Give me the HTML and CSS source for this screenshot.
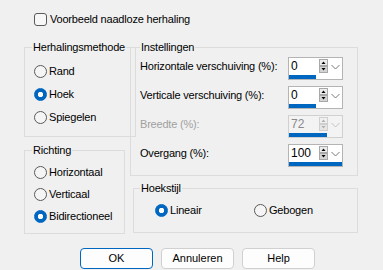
FILE: index.html
```html
<!DOCTYPE html>
<html lang="nl">

<head>
    <meta charset="UTF-8" />
    <title>Naadloze herhaling</title>
    <link rel="stylesheet" href="styles.css">
</head>

<body>
    <div class="dialog">
        <label class="check"><span class="box"></span>Voorbeeld naadloze herhaling</label>

        <div class="main">
            <div class="col col-left">
                <fieldset class="group methode">
                    <legend>Herhalingsmethode</legend>
                    <div class="options">
                        <label class="radio"><span class="dot"></span>Rand</label>
                        <label class="radio on"><span class="dot"></span>Hoek</label>
                        <label class="radio"><span class="dot"></span>Spiegelen</label>
                    </div>
                </fieldset>
                <fieldset class="group richting">
                    <legend>Richting</legend>
                    <div class="options">
                        <label class="radio"><span class="dot"></span>Horizontaal</label>
                        <label class="radio"><span class="dot"></span>Verticaal</label>
                        <label class="radio on"><span class="dot"></span>Bidirectioneel</label>
                    </div>
                </fieldset>
            </div>

            <div class="col col-right">
                <fieldset class="group instellingen">
                    <legend>Instellingen</legend>
                    <div class="settings">
                        <span class="label">Horizontale verschuiving (%):</span>
                        <div class="spin">
                            <div class="spin-row">
                                <span class="value">0</span>
                                <svg class="arrows" width="12" height="17" viewBox="0 0 12 17">
                                    <rect x="1.5" y="1.5" width="8" height="6" fill="#ececec" stroke="#a8a8a8" />
                                    <path d="M3.5 6 L5.5 3.5 L7.5 6 Z" fill="#000" />
                                    <rect x="1.5" y="8.5" width="8" height="6" fill="#d4d4d4" stroke="#a8a8a8" />
                                    <path d="M3.5 10 L5.5 12.5 L7.5 10 Z" fill="#000" />
                                </svg>
                                <svg class="drop" width="12" height="17" viewBox="0 0 12 17">
                                    <path d="M1.5 7 L5.5 11 L9.5 7" fill="none" stroke="#7a7a7a" />
                                </svg>
                            </div>
                            <div class="bar"><span style="width: 50%"></span></div>
                        </div>

                        <span class="label">Verticale verschuiving (%):</span>
                        <div class="spin">
                            <div class="spin-row">
                                <span class="value">0</span>
                                <svg class="arrows" width="12" height="17" viewBox="0 0 12 17">
                                    <rect x="1.5" y="1.5" width="8" height="6" fill="#ececec" stroke="#a8a8a8" />
                                    <path d="M3.5 6 L5.5 3.5 L7.5 6 Z" fill="#000" />
                                    <rect x="1.5" y="8.5" width="8" height="6" fill="#d4d4d4" stroke="#a8a8a8" />
                                    <path d="M3.5 10 L5.5 12.5 L7.5 10 Z" fill="#000" />
                                </svg>
                                <svg class="drop" width="12" height="17" viewBox="0 0 12 17">
                                    <path d="M1.5 7 L5.5 11 L9.5 7" fill="none" stroke="#7a7a7a" />
                                </svg>
                            </div>
                            <div class="bar"><span style="width: 50%"></span></div>
                        </div>

                        <span class="label off">Breedte (%):</span>
                        <div class="spin off">
                            <div class="spin-row">
                                <span class="value">72</span>
                                <svg class="arrows" width="12" height="17" viewBox="0 0 12 17">
                                    <rect x="1.5" y="1.5" width="8" height="6" fill="#f0f0f0" stroke="#cfcfcf" />
                                    <path d="M3.5 6 L5.5 3.5 L7.5 6 Z" fill="#b0b0b0" />
                                    <rect x="1.5" y="8.5" width="8" height="6" fill="#e6e6e6" stroke="#cfcfcf" />
                                    <path d="M3.5 10 L5.5 12.5 L7.5 10 Z" fill="#b0b0b0" />
                                </svg>
                                <svg class="drop" width="12" height="17" viewBox="0 0 12 17">
                                    <path d="M1.5 7 L5.5 11 L9.5 7" fill="none" stroke="#c4c4c4" />
                                </svg>
                            </div>
                            <div class="bar"><span style="width: 72%"></span></div>
                        </div>

                        <span class="label">Overgang (%):</span>
                        <div class="spin">
                            <div class="spin-row">
                                <span class="value">100</span>
                                <svg class="arrows" width="12" height="17" viewBox="0 0 12 17">
                                    <rect x="1.5" y="1.5" width="8" height="6" fill="#ececec" stroke="#a8a8a8" />
                                    <path d="M3.5 6 L5.5 3.5 L7.5 6 Z" fill="#000" />
                                    <rect x="1.5" y="8.5" width="8" height="6" fill="#d4d4d4" stroke="#a8a8a8" />
                                    <path d="M3.5 10 L5.5 12.5 L7.5 10 Z" fill="#000" />
                                </svg>
                                <svg class="drop" width="12" height="17" viewBox="0 0 12 17">
                                    <path d="M1.5 7 L5.5 11 L9.5 7" fill="none" stroke="#7a7a7a" />
                                </svg>
                            </div>
                            <div class="bar"><span style="width: 100%"></span></div>
                        </div>
                    </div>
                </fieldset>

                <fieldset class="group hoekstijl">
                    <legend>Hoekstijl</legend>
                    <div class="inline-options">
                        <label class="radio on wide"><span class="dot"></span>Lineair</label>
                        <label class="radio"><span class="dot"></span>Gebogen</label>
                    </div>
                </fieldset>
            </div>
        </div>

        <div class="buttons">
            <button class="btn default" type="button">OK</button>
            <button class="btn" type="button">Annuleren</button>
            <button class="btn" type="button">Help</button>
        </div>
    </div>
</body>

</html>
```

FILE: styles.css
```css
* {
    padding: 0;
    margin: 0;
    box-sizing: border-box;
}

body {
    background-color: #f0f0f0;
    font-family: "Liberation Sans", Arial, sans-serif;
    font-size: 11px;
    line-height: 13px;
    letter-spacing: -0.2px;
    color: #000;
}

.dialog {
    width: 383px;
    height: 270px;
    padding: 13px 0 0 24px;
}

.check {
    display: flex;
    align-items: center;
    gap: 3px;
    height: 13px;
    margin-left: 10px;
}

.box {
    width: 13px;
    height: 13px;
    border: 1px solid #5a5a5a;
    border-radius: 3px;
    background-color: #f7f7f7;
}

.main {
    display: flex;
    gap: 5px;
    margin-top: 15px;
}

.col {
    display: flex;
    flex-direction: column;
}

.col-left {
    width: 101px;
    gap: 7px;
}

.col-right {
    width: 228px;
    gap: 6px;
}

.group {
    border: 1px solid #dcdcdc;
    padding: 0 9px;

    legend {
        padding: 0 1px;
        line-height: 12px;
    }
}

.methode {
    height: 96px;

    legend {
        margin-left: -2px;
    }

    .options {
        padding-top: 12px;
        gap: 10px;
    }
}

.richting {
    height: 90px;

    legend {
        margin-left: -2px;
    }

    .options {
        padding-top: 10px;
        gap: 9px;
    }
}

.options {
    display: flex;
    flex-direction: column;
}

.radio {
    display: flex;
    align-items: center;
    gap: 2px;
    height: 13px;
    white-space: nowrap;
}

.dot {
    flex: none;
    width: 13px;
    height: 13px;
    border: 1px solid #5a5a5a;
    border-radius: 50%;
    background-color: #f5f5f5;
}

.radio.on .dot {
    border-color: #0067c0;
    background: radial-gradient(circle, #fff 0 2.4px, #0067c0 3px);
}

.instellingen {
    height: 135px;
}

.settings {
    display: grid;
    grid-template-columns: 148px 55px;
    row-gap: 6px;
    padding-top: 4px;

    .label {
        padding-top: 3px;
        white-space: nowrap;
    }

    .label.off {
        color: #a0a0a0;
    }
}

.spin {
    display: flex;
    flex-direction: column;
    height: 23px;
    border: 1px solid #b4b4b4;
    background-color: #fff;

    .spin-row {
        display: flex;
        height: 17px;
    }

    .value {
        width: 29px;
        padding-left: 2px;
        font-size: 12px;
        line-height: 17px;
        letter-spacing: 0;
    }

    .bar {
        height: 4px;

        span {
            display: block;
            height: 100%;
            background-color: #0067c0;
        }
    }
}

.spin.off {
    border-color: #d0d0d0;
    background-color: #f3f3f3;

    .value {
        color: #8a8a8a;
    }
}

.hoekstijl {
    height: 51px;
    margin-left: 3px;
    padding: 0 7px;

    legend {
        margin-left: -1px;
    }
}

.inline-options {
    display: flex;
    padding: 10px 0 0 14px;

    .wide {
        width: 99px;
    }
}

.buttons {
    display: flex;
    gap: 8px;
    margin: 14px 0 0 56px;
}

.btn {
    width: 73px;
    height: 21px;
    border: 1px solid #d0d0d0;
    border-radius: 4px;
    background-color: #fdfdfd;
    font: inherit;
    color: #000;
    cursor: pointer;
}

.btn.default {
    border-color: #0067c0;
}
```
